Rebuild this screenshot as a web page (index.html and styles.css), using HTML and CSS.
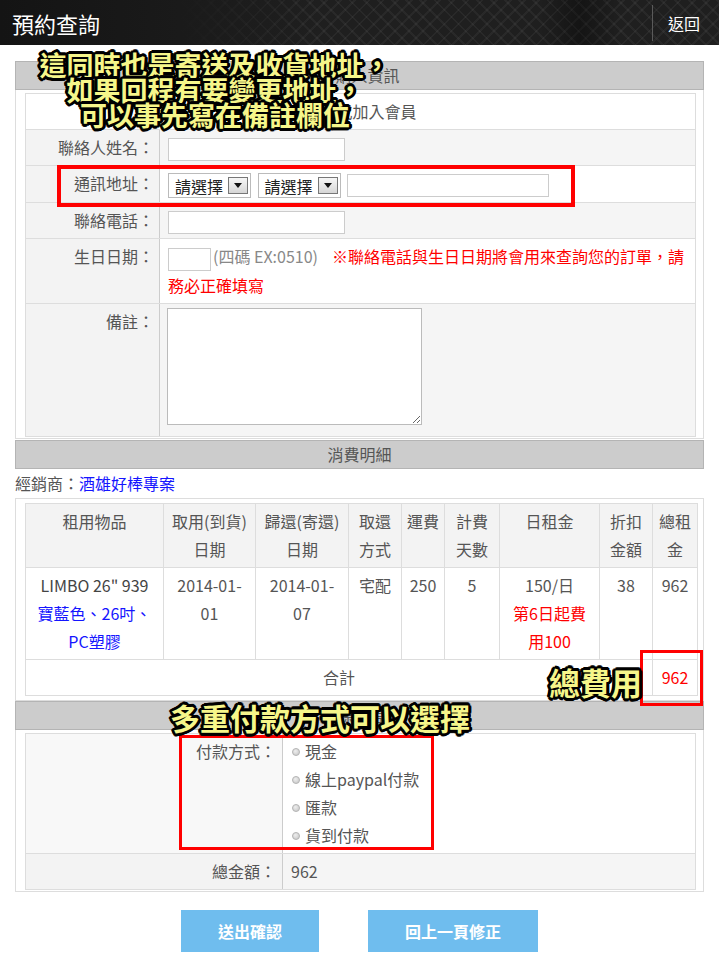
FILE: index.html
```html
<!DOCTYPE html>
<html>
<head>
<meta charset="utf-8">
<title>預約查詢</title>
<link rel="stylesheet" href="styles.css">
</head>
<body>
<div id="header">
    <h1>預約查詢</h1>
    <a class="back" href="#">返回</a>
</div>

<div id="page">
    <div class="bar">訂購人資訊</div>
    <div class="box box-open">
        <table class="form">
            <tr><td colspan="2" class="member">登入或加入會員</td></tr>
            <tr class="striped">
                <th>聯絡人姓名：</th>
                <td><input type="text" class="txt"></td>
            </tr>
            <tr>
                <th>通訊地址：</th>
                <td>
                    <span class="select">請選擇<span class="select-btn"></span></span>
                    <span class="select">請選擇<span class="select-btn"></span></span>
                    <input type="text" class="txt txt-addr">
                </td>
            </tr>
            <tr class="striped">
                <th>聯絡電話：</th>
                <td><input type="text" class="txt"></td>
            </tr>
            <tr>
                <th>生日日期：</th>
                <td><input type="text" class="txt txt-short"><span class="hint">(四碼 EX:0510)</span><span class="warn">※聯絡電話與生日日期將會用來查詢您的訂單，請務必正確填寫</span></td>
            </tr>
            <tr class="striped">
                <th>備註：</th>
                <td><textarea class="memo"></textarea></td>
            </tr>
        </table>
    </div>

    <div class="bar bar-gap">消費明細</div>
    <div class="dealer">經銷商：<a href="#">酒雄好棒專案</a></div>

    <div class="box box-detail">
        <table class="detail">
            <colgroup>
                <col style="width:138px"><col style="width:92px"><col style="width:93px">
                <col style="width:53px"><col style="width:43px"><col style="width:55px">
                <col style="width:100px"><col style="width:53px"><col style="width:45px">
            </colgroup>
            <tr class="head">
                <th>租用物品</th>
                <th>取用(到貨)<br>日期</th>
                <th>歸還(寄還)<br>日期</th>
                <th>取還<br>方式</th>
                <th>運費</th>
                <th>計費<br>天數</th>
                <th>日租金</th>
                <th>折扣<br>金額</th>
                <th>總租<br>金</th>
            </tr>
            <tr>
                <td class="item">LIMBO 26" 939<br><span class="spec">寶藍色、26吋、<br>PC塑膠</span></td>
                <td>2014-01-<br>01</td>
                <td>2014-01-<br>07</td>
                <td>宅配</td>
                <td>250</td>
                <td>5</td>
                <td>150/日<br><span class="red">第6日起費<br>用100</span></td>
                <td>38</td>
                <td>962</td>
            </tr>
            <tr>
                <td colspan="8">合計</td>
                <td class="red">962</td>
            </tr>
        </table>
    </div>

    <div class="bar">付款資訊</div>
    <div class="box box-open box-pay">
        <table class="form pay">
            <tr>
                <th>付款方式：</th>
                <td>
                    <div class="opt"><span class="radio"></span>現金</div>
                    <div class="opt"><span class="radio"></span>線上paypal付款</div>
                    <div class="opt"><span class="radio"></span>匯款</div>
                    <div class="opt"><span class="radio"></span>貨到付款</div>
                </td>
            </tr>
            <tr class="striped">
                <th>總金額：</th>
                <td>962</td>
            </tr>
        </table>
    </div>

    <div class="actions">
        <button class="btn">送出確認</button>
        <button class="btn">回上一頁修正</button>
    </div>
</div>

<!-- annotations drawn over the screenshot -->
<div class="mark mark-addr"></div>
<div class="mark mark-total"></div>
<div class="mark mark-pay"></div>
<div class="note note-addr">這同時也是寄送及收貨地址，<br>如果回程有要變更地址，<br>可以事先寫在備註欄位</div>
<div class="note note-total">總費用</div>
<div class="note note-pay">多重付款方式可以選擇</div>
</body>
</html>
```

FILE: styles.css
```css
body {
    margin: 0;
    position: relative;
    font-family: "Noto Sans CJK TC", sans-serif;
    font-size: 16px;
    color: #555;
    background-color: white;
}

#header {
    height: 45px;
    display: flex;
    align-items: center;
    background:
        linear-gradient(90deg, #141414 0, #1a1a1a 180px, rgba(20,20,20,0) 320px),
        linear-gradient(90deg, rgba(0,0,0,0) 540px, rgba(0,0,0,0.35) 580px, rgba(0,0,0,0) 620px),
        repeating-linear-gradient(45deg, rgba(255,255,255,0) 0 8px, rgba(255,255,255,0.045) 8px 10px),
        repeating-linear-gradient(-45deg, rgba(255,255,255,0) 0 8px, rgba(255,255,255,0.045) 8px 10px),
        #1f1f1f;
}

#header h1 {
    flex: 1;
    margin: 0 0 0 12px;
    font-size: 22px;
    font-weight: normal;
    color: white;
}

#header .back {
    height: 36px;
    line-height: 36px;
    padding: 0 19px 0 15px;
    border-left: 1px solid #5a5a5a;
    color: white;
    font-size: 16px;
    text-decoration: none;
}

#page {
    padding: 16px 15px 0;
}

.bar {
    height: 27px;
    line-height: 27px;
    background-color: #ccc;
    border: 1px solid #b4b4b4;
    text-align: center;
}

.bar-gap {
    margin-top: 1px;
}

.box {
    border: 1px solid #ddd;
    padding: 3px 7px 1px 9px;
}

.box-open {
    border-top: none;
}

.box-detail {
    padding: 4px 7px 4px 9px;
}

.box-pay {
    padding-top: 3px;
}

table {
    width: 100%;
    border-collapse: collapse;
}

/* form tables */
.form th, .form td {
    border: 1px solid #ddd;
    padding: 3px 8px 4px;
    line-height: 28px;
    vertical-align: top;
    text-align: left;
}

.form th {
    width: 120px;
    padding-right: 5px;
    text-align: right;
    font-weight: normal;
    background-color: #f3f3f3;
    border-right-color: #ccc;
}

.form tr.striped td {
    background-color: #f5f5f5;
}

.form td.member {
    text-align: center;
    background-color: white;
}

.txt {
    width: 177px;
    height: 23px;
    box-sizing: border-box;
    border: 1px solid #ccc;
    vertical-align: middle;
    margin: 0;
}

.txt-addr {
    width: 202px;
}

.txt-short {
    width: 43px;
}

.select {
    display: inline-flex;
    align-items: center;
    height: 25px;
    box-sizing: border-box;
    padding: 0 2px 0 6px;
    border: 1px solid #bbb;
    background-color: white;
    color: #222;
    vertical-align: middle;
    margin-right: 3px;
}

.select-btn {
    position: relative;
    width: 20px;
    height: 17px;
    margin-left: 5px;
    box-sizing: border-box;
    border: 1px solid #777;
    background: linear-gradient(#f6f6f6, #d6d6d6);
}

.select-btn:after {
    content: "";
    position: absolute;
    left: 5px;
    top: 5px;
    border-left: 4px solid transparent;
    border-right: 4px solid transparent;
    border-top: 5px solid #111;
}

.hint {
    color: #888;
    margin: 0 14px 0 2px;
}

.warn {
    color: #f00;
}

.memo {
    display: block;
    width: 255px;
    height: 117px;
    box-sizing: border-box;
    margin: 1px 0 7px -1px;
    border: 1px solid #bbb;
}

.dealer {
    line-height: 29px;
}

.dealer a {
    color: #1515ff;
    text-decoration: none;
}

/* detail table */
.detail {
    table-layout: fixed;
}

.detail th, .detail td {
    border: 1px solid #ddd;
    padding: 3px 4px 4px;
    line-height: 28px;
    text-align: center;
    vertical-align: top;
    font-weight: normal;
}

.detail tr.head th {
    background-color: #f3f3f3;
}

.detail .item {
    color: #444;
}

.spec {
    color: #1515ff;
}

.red {
    color: #f00;
}

/* payment */
.pay th {
    width: 242px;
    padding-right: 6px;
}

.pay tr:first-child th {
    background-color: #f8f8f8;
}

.opt {
    display: flex;
    align-items: center;
}

.radio {
    width: 8px;
    height: 8px;
    margin: 3px 5px 0 1px;
    border-radius: 50%;
    border: 1px solid #b5b5b5;
    box-sizing: border-box;
    background: radial-gradient(circle at 40% 35%, #eee, #c4c4c4);
}

.actions {
    display: flex;
    justify-content: center;
    gap: 49px;
    margin-top: 18px;
    padding-bottom: 10px;
}

.btn {
    height: 42px;
    padding: 0 37px;
    border: none;
    background-color: #6fbdee;
    color: white;
    font-family: "Noto Sans CJK TC", sans-serif;
    font-size: 16px;
    font-weight: bold;
}

/* annotations */
.mark {
    position: absolute;
    box-sizing: border-box;
    border: 3px solid #f00;
}

.mark-addr {
    left: 57px;
    top: 165px;
    width: 518px;
    height: 42px;
    border-width: 4px;
}

.mark-total {
    left: 640px;
    top: 650px;
    width: 63px;
    height: 56px;
}

.mark-pay {
    left: 179px;
    top: 735px;
    width: 255px;
    height: 115px;
}

.note {
    position: absolute;
    color: #f6f68a;
    font-weight: bold;
    text-align: center;
    white-space: nowrap;
    text-shadow:
        -2px -2px 0 #000, 2px -2px 0 #000, -2px 2px 0 #000, 2px 2px 0 #000,
        0 -3px 0 #000, 0 3px 0 #000, -3px 0 0 #000, 3px 0 0 #000,
        -3px -1px 0 #000, 3px 1px 0 #000, -1px 3px 0 #000, 1px -3px 0 #000;
}

.note-addr {
    left: 15px;
    top: 52px;
    width: 400px;
    font-size: 27px;
    line-height: 25px;
}

.note-total {
    left: 549px;
    top: 665px;
    font-size: 31px;
    line-height: 34px;
}

.note-pay {
    left: 170px;
    top: 701px;
    font-size: 30px;
    line-height: 32px;
}
```
